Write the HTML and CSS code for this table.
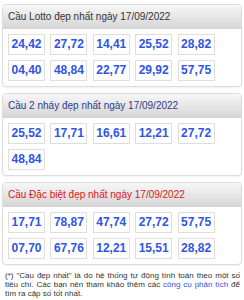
FILE: index.html
```html
<!DOCTYPE html>
<html lang="vi">
<head>
<meta charset="utf-8">
<link rel="stylesheet" href="styles.css">
</head>
<body>
<div class="page">
  <div class="panel">
    <div class="panel-head">Cầu Lotto đẹp nhất ngày 17/09/2022</div>
    <div class="panel-body">
      <span class="num">24,42</span><span class="num">27,72</span><span class="num">14,41</span><span class="num">25,52</span><span class="num">28,82</span>
      <span class="num">04,40</span><span class="num">48,84</span><span class="num">22,77</span><span class="num">29,92</span><span class="num">57,75</span>
    </div>
  </div>
  <div class="panel">
    <div class="panel-head head-blue">Cầu 2 nháy đẹp nhất ngày 17/09/2022</div>
    <div class="panel-body">
      <span class="num">25,52</span><span class="num">17,71</span><span class="num">16,61</span><span class="num">12,21</span><span class="num">27,72</span>
      <span class="num">48,84</span>
    </div>
  </div>
  <div class="panel">
    <div class="panel-head head-red">Cầu Đặc biệt đẹp nhất ngày 17/09/2022</div>
    <div class="panel-body">
      <span class="num">17,71</span><span class="num">78,87</span><span class="num">47,74</span><span class="num">27,72</span><span class="num">57,75</span>
      <span class="num">07,70</span><span class="num">67,76</span><span class="num">12,21</span><span class="num">15,51</span><span class="num">28,82</span>
    </div>
  </div>
  <p class="note">(*) "Cầu đẹp nhất" là do hệ thống tự động tính toán theo một số<br>tiêu chí. Các bạn nên tham khảo thêm các <span class="link">công cụ phân tích</span> để <span class="note-end">tìm ra cặp số tốt nhất.</span></p>
</div>
</body>
</html>
```

FILE: styles.css
```css
html, body {
  margin: 0;
  padding: 0;
  background: #fff;
}
.page {
  padding: 4px 2px 0 2px;
  font-family: "Liberation Sans", Arial, sans-serif;
}
.panel {
  border: 1px solid #dcdcdc;
  border-radius: 4px;
  margin-bottom: 6px;
  box-shadow: 0 1px 2px rgba(0,0,0,0.06);
  overflow: hidden;
}
.panel-head {
  height: 23px;
  line-height: 23px;
  padding-left: 5px;
  font-size: 10px;
  color: #333;
  background: linear-gradient(#f7f7f7, #d6d6d6);
  border-bottom: 1px solid #d4d4d4;
  white-space: nowrap;
}
.head-blue { color: #2e3b8f; }
.head-red { color: #e01515; }
.panel-body {
  display: grid;
  grid-template-columns: repeat(5, 37px);
  column-gap: 5.4px;
  row-gap: 5px;
  padding: 5px 5px 5px 5px;
}
.num {
  display: block;
  height: 19px;
  line-height: 19px;
  border: 1px solid #dedede;
  text-align: center;
  font-weight: bold;
  font-size: 12px;
  color: #2f55e6;
}
.note {
  margin: 0;
  padding: 0 2px 0 3px;
  font-size: 8px;
  line-height: 9px;
  color: #333;
  white-space: nowrap;
  text-align: justify;
  text-align-last: justify;
}
.note-end {
  display: block;
  text-align: left;
  text-align-last: left;
}
.link { color: #2f55e6; }
```
